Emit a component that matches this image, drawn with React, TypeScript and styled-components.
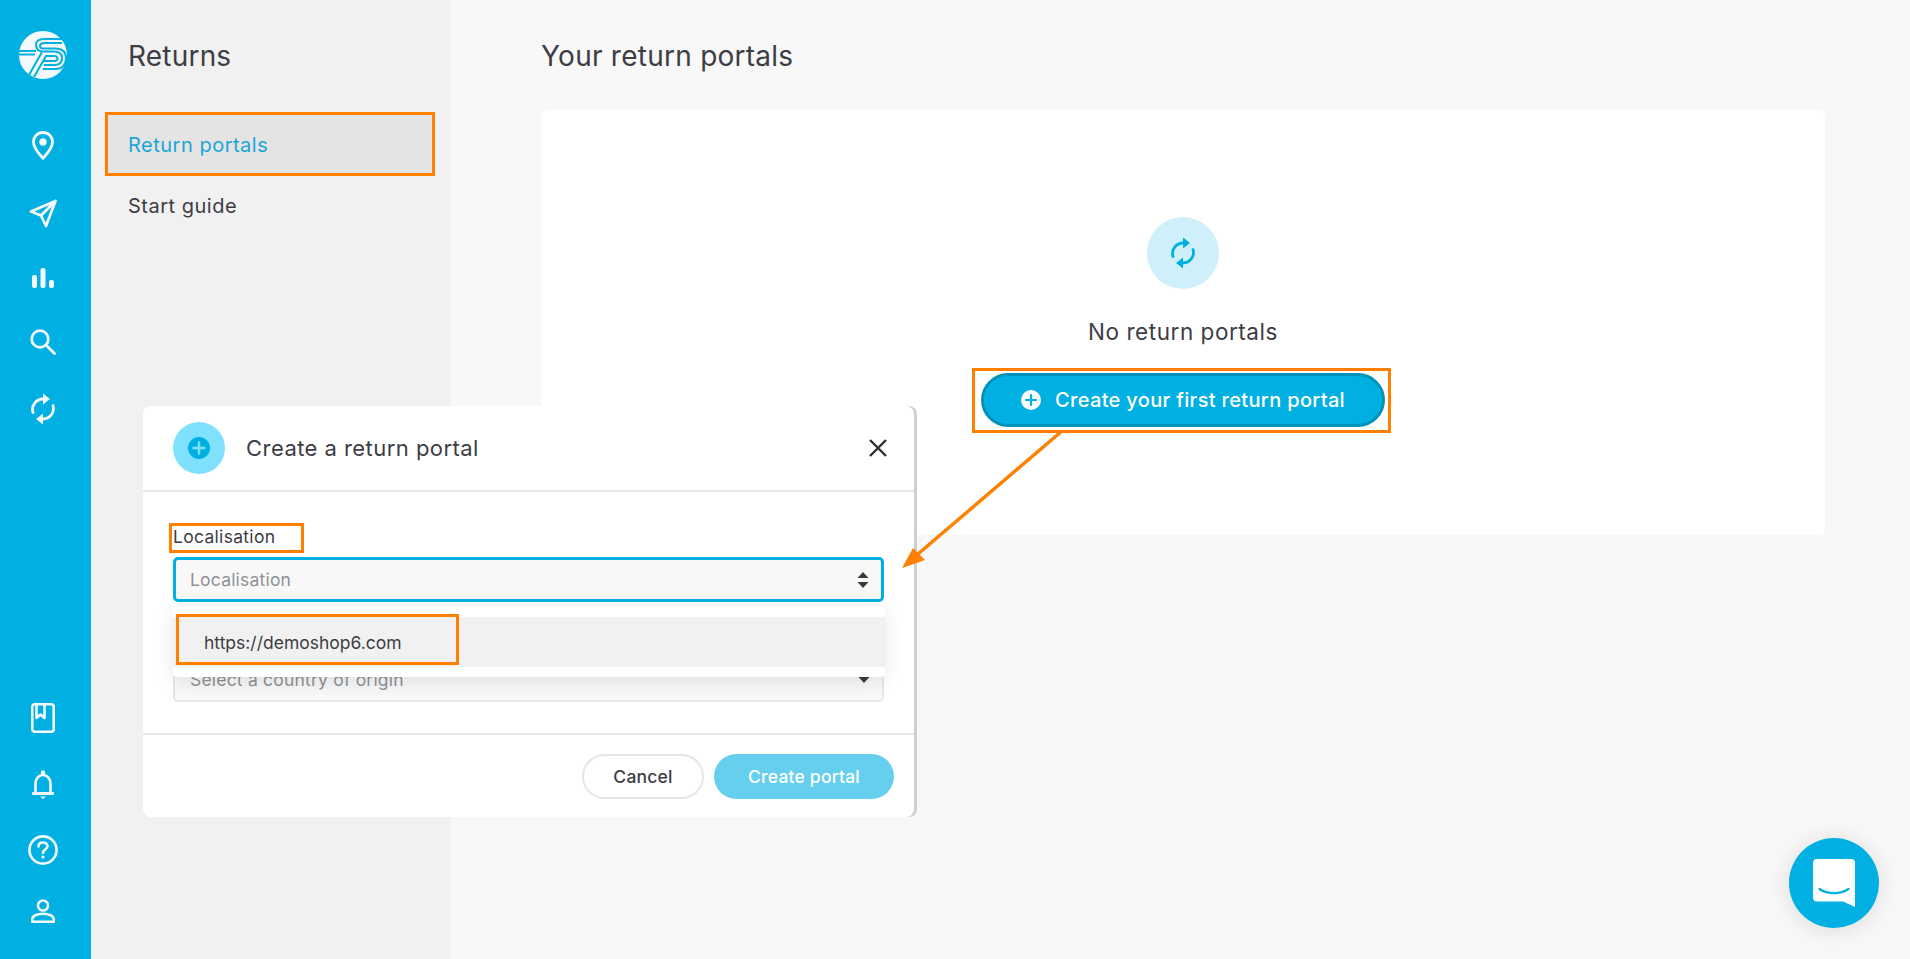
import React from "react";
import styled, { createGlobalStyle } from "styled-components";

const Global = createGlobalStyle`
  html, body { margin: 0; padding: 0; height: 100%; overflow: hidden; }
  body { font-family: "Inter", "Liberation Sans", sans-serif; color: #3d3d45; background: #f8f8f8; }
  * { box-sizing: border-box; }
`;

const Page = styled.div`
  position: relative;
  display: flex;
  width: 1910px;
  height: 959px;
  overflow: hidden;
`;

const Rail = styled.nav`
  width: 91px;
  flex: none;
  background: #00b0e2;
  display: flex;
  flex-direction: column;
  justify-content: space-between;
  padding: 31px 5px 20px 0;
`;
const RailGroup = styled.div`
  display: flex;
  flex-direction: column;
  align-items: center;
`;
const RailLogo = styled.div`
  height: 48px;
  margin-bottom: 33px;
  display: flex;
`;
const RailCell = styled.div<{ $h: number }>`
  height: ${(p) => p.$h}px;
  display: flex;
  align-items: center;
  justify-content: center;
`;

const Sidebar = styled.aside`
  width: 360px;
  flex: none;
  background: #f1f1f1;
  padding: 36px 0 0 14px;
`;
const SideTitle = styled.h2`
  margin: 0 0 36px 23px;
  font-size: 28px;
  letter-spacing: 0.2px;
  line-height: 40px;
  font-weight: 400;
`;
const SideItem = styled.div<{ $active?: boolean }>`
  width: 330px;
  height: ${(p) => (p.$active ? 64 : 60)}px;
  display: flex;
  align-items: center;
  padding-left: ${(p) => (p.$active ? 20 : 23)}px;
  padding-top: ${(p) => (p.$active ? 1 : 0)}px;
  font-size: 20px;
  letter-spacing: 0.5px;
  color: ${(p) => (p.$active ? "#1ba5d8" : "#3d3d45")};
  background: ${(p) => (p.$active ? "#e4e4e4" : "transparent")};
  border: ${(p) => (p.$active ? "3px solid #ff7f00" : "none")};
`;

const Main = styled.main`
  flex: 1;
  padding: 36px 85px 0 90px;
`;
const MainTitle = styled.h1`
  margin: 0 0 34px;
  font-size: 28px;
  letter-spacing: 0.25px;
  line-height: 40px;
  font-weight: 400;
`;
const Card = styled.section`
  height: 425px;
  background: #fff;
  border-radius: 6px;
  padding-top: 107px;
  display: flex;
  flex-direction: column;
  align-items: center;
`;
const EmptyIcon = styled.div`
  width: 72px;
  height: 72px;
  border-radius: 50%;
  background: #cff0fa;
  display: flex;
  align-items: center;
  justify-content: center;
`;
const EmptyText = styled.p`
  margin: 28px 0 26px;
  font-size: 22.5px;
  letter-spacing: 0.55px;
  line-height: 30px;
`;
const CtaWrap = styled.div`
  position: relative;
`;
const Cta = styled.button`
  width: 404px;
  height: 54px;
  border-radius: 27px;
  border: 3px solid #0092b8;
  background: #00b0e2;
  color: #fff;
  font: 500 20px "Inter", "Liberation Sans", sans-serif;
  letter-spacing: 0.33px;
  display: flex;
  align-items: center;
  justify-content: center;
  gap: 14px;
  padding: 0;
`;

const Mark = styled.div<{ $l: number; $t: number; $w: number; $h: number }>`
  position: absolute;
  left: ${(p) => p.$l}px;
  top: ${(p) => p.$t}px;
  width: ${(p) => p.$w}px;
  height: ${(p) => p.$h}px;
  border: 3px solid #ff7f00;
  pointer-events: none;
`;

const Modal = styled.div`
  position: absolute;
  left: 143px;
  top: 406px;
  width: 771px;
  height: 411px;
  background: #fff;
  border-radius: 8px;
  box-shadow: 3px 0 0 #cfcfcf;
  display: flex;
  flex-direction: column;
`;
const ModalHeader = styled.header`
  height: 86px;
  flex: none;
  border-bottom: 2px solid #e8e8e8;
  display: flex;
  align-items: center;
  padding: 0 27px 0 30px;
  gap: 21px;
`;
const ModalBadge = styled.div`
  width: 52px;
  height: 52px;
  border-radius: 50%;
  background: #80e1ff;
  display: flex;
  align-items: center;
  justify-content: center;
  flex: none;
`;
const ModalTitle = styled.h3`
  flex: 1;
  margin: 0;
  font-size: 22px;
  letter-spacing: 0.45px;
  font-weight: 400;
`;
const ModalBody = styled.div`
  height: 243px;
  flex: none;
  padding: 34px 30px 0;
  border-bottom: 2px solid #e8e8e8;
`;
const Label = styled.div`
  position: relative;
  font-size: 17.5px;
  letter-spacing: 0.3px;
  line-height: 22px;
  margin-bottom: 9px;
`;
const Select = styled.div<{ $focus?: boolean }>`
  height: 45px;
  border-radius: 5px;
  background: #f8f8f8;
  border: ${(p) => (p.$focus ? "3px solid #00b0e2" : "2px solid #e6e6e6")};
  padding-left: ${(p) => (p.$focus ? 14 : 15)}px;
  padding-right: 12px;
  margin-bottom: 55px;
  display: flex;
  align-items: center;
  justify-content: space-between;
  font-size: 17.5px;
  letter-spacing: 0.2px;
  color: #8e9196;
`;
const Menu = styled.div`
  position: absolute;
  left: 30px;
  top: 201px;
  width: 712px;
  height: 70px;
  padding: 10px 0;
  background: #fff;
  border-radius: 4px;
  box-shadow: 0 4px 20px rgba(0, 0, 0, 0.1);
`;
const Option = styled.div`
  position: relative;
  height: 50px;
  background: #f1f1f1;
  padding-left: 31px;
  display: flex;
  align-items: center;
  font-size: 17.5px;
`;
const ModalFooter = styled.footer`
  flex: 1;
  display: flex;
  justify-content: flex-end;
  align-items: flex-start;
  gap: 10px;
  padding: 19px 20px 0 0;
`;
const Btn = styled.button<{ $primary?: boolean }>`
  width: ${(p) => (p.$primary ? 180 : 122)}px;
  height: 45px;
  border-radius: 23px;
  border: ${(p) => (p.$primary ? "none" : "2px solid #e6e6e6")};
  background: ${(p) => (p.$primary ? "#66cfee" : "#fff")};
  color: ${(p) => (p.$primary ? "#fff" : "#3d3d45")};
  font: 500 17.5px "Inter", "Liberation Sans", sans-serif;
  letter-spacing: 0.2px;
  padding: 0;
`;

const ArrowLayer = styled.svg`
  position: absolute;
  left: 0;
  top: 0;
  pointer-events: none;
`;
const Chat = styled.div`
  position: absolute;
  left: 1789px;
  top: 838px;
  width: 90px;
  height: 90px;
  border-radius: 50%;
  background: #00b0e2;
  box-shadow: 0 2px 24px rgba(0, 0, 0, 0.12);
  display: flex;
  align-items: center;
  justify-content: center;
`;

const W = "#f4f9fb";

const Logo = () => (
  <svg width="48" height="48" viewBox="0 0 48 48">
    <circle cx="24" cy="24" r="24" fill={W} />
    <g fill="none" stroke="#00b0e2" strokeWidth="2">
      <path d="M43 8 H25 Q17 8 17 14 Q17 20.5 25 20.5 H35 Q43 20.5 43 27 Q43 34 35 34 H25" />
      <path d="M43 12 H26 Q21 12 21 15 Q21 17.5 25 17.5 H36 Q47 17.5 47 27 Q47 38 36 38 H24" />
      <path d="M0 20 H17 M0 23.5 H16" />
      <path d="M10 44 L23 21 M15 46 L27 25 H35 Q38.5 25 38.5 27.5 Q38.5 30 35 30 H25" />
    </g>
  </svg>
);
const PinIcon = () => (
  <svg width="22" height="29" viewBox="0 0 22 29">
    <path d="M11 1.5C5.5 1.5 1.5 5.5 1.5 11C1.5 16 7 23 11 27.3C15 23 20.5 16 20.5 11C20.5 5.5 16.5 1.5 11 1.5Z" fill="none" stroke={W} strokeWidth="2.8" strokeLinejoin="round" />
    <circle cx="11" cy="11" r="3.7" fill={W} />
  </svg>
);
const SendIcon = () => (
  <svg width="28" height="29" viewBox="0 0 28 29">
    <path d="M2 12.5L26.5 2L17 27L12 16.5ZM12 16.5L26.5 2" fill="none" stroke={W} strokeWidth="2.7" strokeLinejoin="round" strokeLinecap="round" />
  </svg>
);
const BarsIcon = () => (
  <svg width="22" height="20" viewBox="0 0 22 20" fill={W}>
    <rect x="0" y="7" width="5" height="13" rx="2" />
    <rect x="8.5" y="0" width="5" height="20" rx="2" />
    <rect x="17" y="12" width="5" height="8" rx="2" />
  </svg>
);
const SearchIcon = () => (
  <svg width="26" height="26" viewBox="0 0 26 26" fill="none" stroke={W} strokeWidth="2.8" strokeLinecap="round">
    <circle cx="10" cy="10" r="8.3" />
    <path d="M16.5 16.5L24.5 24.5" />
  </svg>
);
const CycleIcon = ({ color }: { color: string }) => (
  <svg width="24" height="32" viewBox="0 0 24 32">
    <path d="M2 19.5A10.5 10.5 0 0 1 12.5 6" fill="none" stroke={color} strokeWidth="2.8" strokeLinecap="round" />
    <path d="M12 0.5L19 6L12 11.5Z" fill={color} />
    <path d="M22 12.5A10.5 10.5 0 0 1 11.5 26" fill="none" stroke={color} strokeWidth="2.8" strokeLinecap="round" />
    <path d="M12 20.5L5 26L12 31.5Z" fill={color} />
  </svg>
);
const BookIcon = () => (
  <svg width="24" height="30" viewBox="0 0 24 30" fill="none" stroke={W} strokeWidth="2.6" strokeLinejoin="round">
    <rect x="1.3" y="1.3" width="21.4" height="27.4" rx="2.5" />
    <path d="M5.5 1.5V15L9.5 11.5L13.5 15V1.5" />
  </svg>
);
const BellIcon = () => (
  <svg width="22" height="29" viewBox="0 0 22 29" fill="none" stroke={W} strokeWidth="2.6" strokeLinecap="round">
    <path d="M3.5 23V13.5C3.5 9 6.5 5 11 5C15.5 5 18.5 9 18.5 13.5V23" />
    <path d="M1.2 23.5H20.8" strokeWidth="3" />
    <circle cx="11" cy="2.5" r="2.2" fill={W} stroke="none" />
    <path d="M8 26.5H14L11 29Z" fill={W} stroke="none" />
  </svg>
);
const HelpIcon = () => (
  <svg width="30" height="30" viewBox="0 0 30 30" fill="none" stroke={W} strokeWidth="2.6" strokeLinecap="round">
    <circle cx="15" cy="15" r="13.6" />
    <path d="M10.5 11.5C10.5 8.8 12.5 7.5 15 7.5C17.5 7.5 19.5 9 19.5 11.3C19.5 14.3 15 14.5 15 18" />
    <circle cx="15" cy="22" r="1.6" fill={W} stroke="none" />
  </svg>
);
const UserIcon = () => (
  <svg width="24" height="24" viewBox="0 0 24 24" fill="none" stroke={W} strokeWidth="2.6" strokeLinejoin="round">
    <circle cx="12" cy="6.5" r="5" />
    <path d="M1.3 22.7V20C1.3 17 6 14.8 12 14.8C18 14.8 22.7 17 22.7 20V22.7Z" />
  </svg>
);
const PlusDisc = ({ size, disc, plus }: { size: number; disc: string; plus: string }) => (
  <svg width={size} height={size} viewBox="0 0 20 20">
    <circle cx="10" cy="10" r="10" fill={disc} />
    <path d="M10 5V15M5 10H15" stroke={plus} strokeWidth="2.2" strokeLinecap="round" />
  </svg>
);
const CloseIcon = () => (
  <svg width="18" height="18" viewBox="0 0 18 18" stroke="#2e2e33" strokeWidth="2.4">
    <path d="M1 1L17 17M17 1L1 17" />
  </svg>
);
const UpDown = () => (
  <svg width="12" height="16" viewBox="0 0 12 16" fill="#3a3a40">
    <path d="M6 0L11.5 6H0.5Z" />
    <path d="M6 16L11.5 10H0.5Z" />
  </svg>
);
const Down = () => (
  <svg width="12" height="6" viewBox="0 0 12 6" fill="#3a3a40">
    <path d="M6 6L11.5 0H0.5Z" />
  </svg>
);
const ChatGlyph = () => (
  <svg width="42" height="48" viewBox="0 0 42 48">
    <path d="M4 0H38A4 4 0 0 1 42 4V48L30 42.5H4A4 4 0 0 1 0 38.5V4A4 4 0 0 1 4 0Z" fill="#fff" />
    <path d="M6.5 30C15 35.5 27 35.5 35.5 30" fill="none" stroke="#00b0e2" strokeWidth="2.4" strokeLinecap="round" />
  </svg>
);

export default function App() {
  return (
    <Page>
      <Global />
      <Rail>
        <RailGroup>
          <RailLogo><Logo /></RailLogo>
          <RailCell $h={67}><PinIcon /></RailCell>
          <RailCell $h={68}><SendIcon /></RailCell>
          <RailCell $h={61}><BarsIcon /></RailCell>
          <RailCell $h={68}><SearchIcon /></RailCell>
          <RailCell $h={66}><CycleIcon color={W} /></RailCell>
        </RailGroup>
        <RailGroup>
          <RailCell $h={66}><BookIcon /></RailCell>
          <RailCell $h={66}><BellIcon /></RailCell>
          <RailCell $h={66}><HelpIcon /></RailCell>
          <RailCell $h={56}><UserIcon /></RailCell>
        </RailGroup>
      </Rail>
      <Sidebar>
        <SideTitle>Returns</SideTitle>
        <SideItem $active>Return portals</SideItem>
        <SideItem>Start guide</SideItem>
      </Sidebar>
      <Main>
        <MainTitle>Your return portals</MainTitle>
        <Card>
          <EmptyIcon><CycleIcon color="#00b0e2" /></EmptyIcon>
          <EmptyText>No return portals</EmptyText>
          <CtaWrap>
            <Cta><PlusDisc size={20} disc="#fff" plus="#00b0e2" />Create your first return portal</Cta>
            <Mark $l={-9} $t={-5} $w={419} $h={65} />
          </CtaWrap>
        </Card>
      </Main>

      <Modal>
        <ModalHeader>
          <ModalBadge><PlusDisc size={22} disc="#00b0e2" plus="#80e1ff" /></ModalBadge>
          <ModalTitle>Create a return portal</ModalTitle>
          <CloseIcon />
        </ModalHeader>
        <ModalBody>
          <Label>
            Localisation
            <Mark $l={-4} $t={-3} $w={135} $h={30} />
          </Label>
          <Select $focus>Localisation<UpDown /></Select>
          <Select>Select a country of origin<Down /></Select>
        </ModalBody>
        <ModalFooter>
          <Btn>Cancel</Btn>
          <Btn $primary>Create portal</Btn>
        </ModalFooter>
        <Menu>
          <Option>
            https://demoshop6.com
            <Mark $l={3} $t={-3} $w={283} $h={51} />
          </Option>
        </Menu>
      </Modal>

      <ArrowLayer width="1910" height="959" viewBox="0 0 1910 959">
        <path d="M1062 431L918 554" stroke="#ff7f00" strokeWidth="3.4" />
        <path d="M902 568L913 548L925 560Z" fill="#ff7f00" />
      </ArrowLayer>
      <Chat><ChatGlyph /></Chat>
    </Page>
  );
}
